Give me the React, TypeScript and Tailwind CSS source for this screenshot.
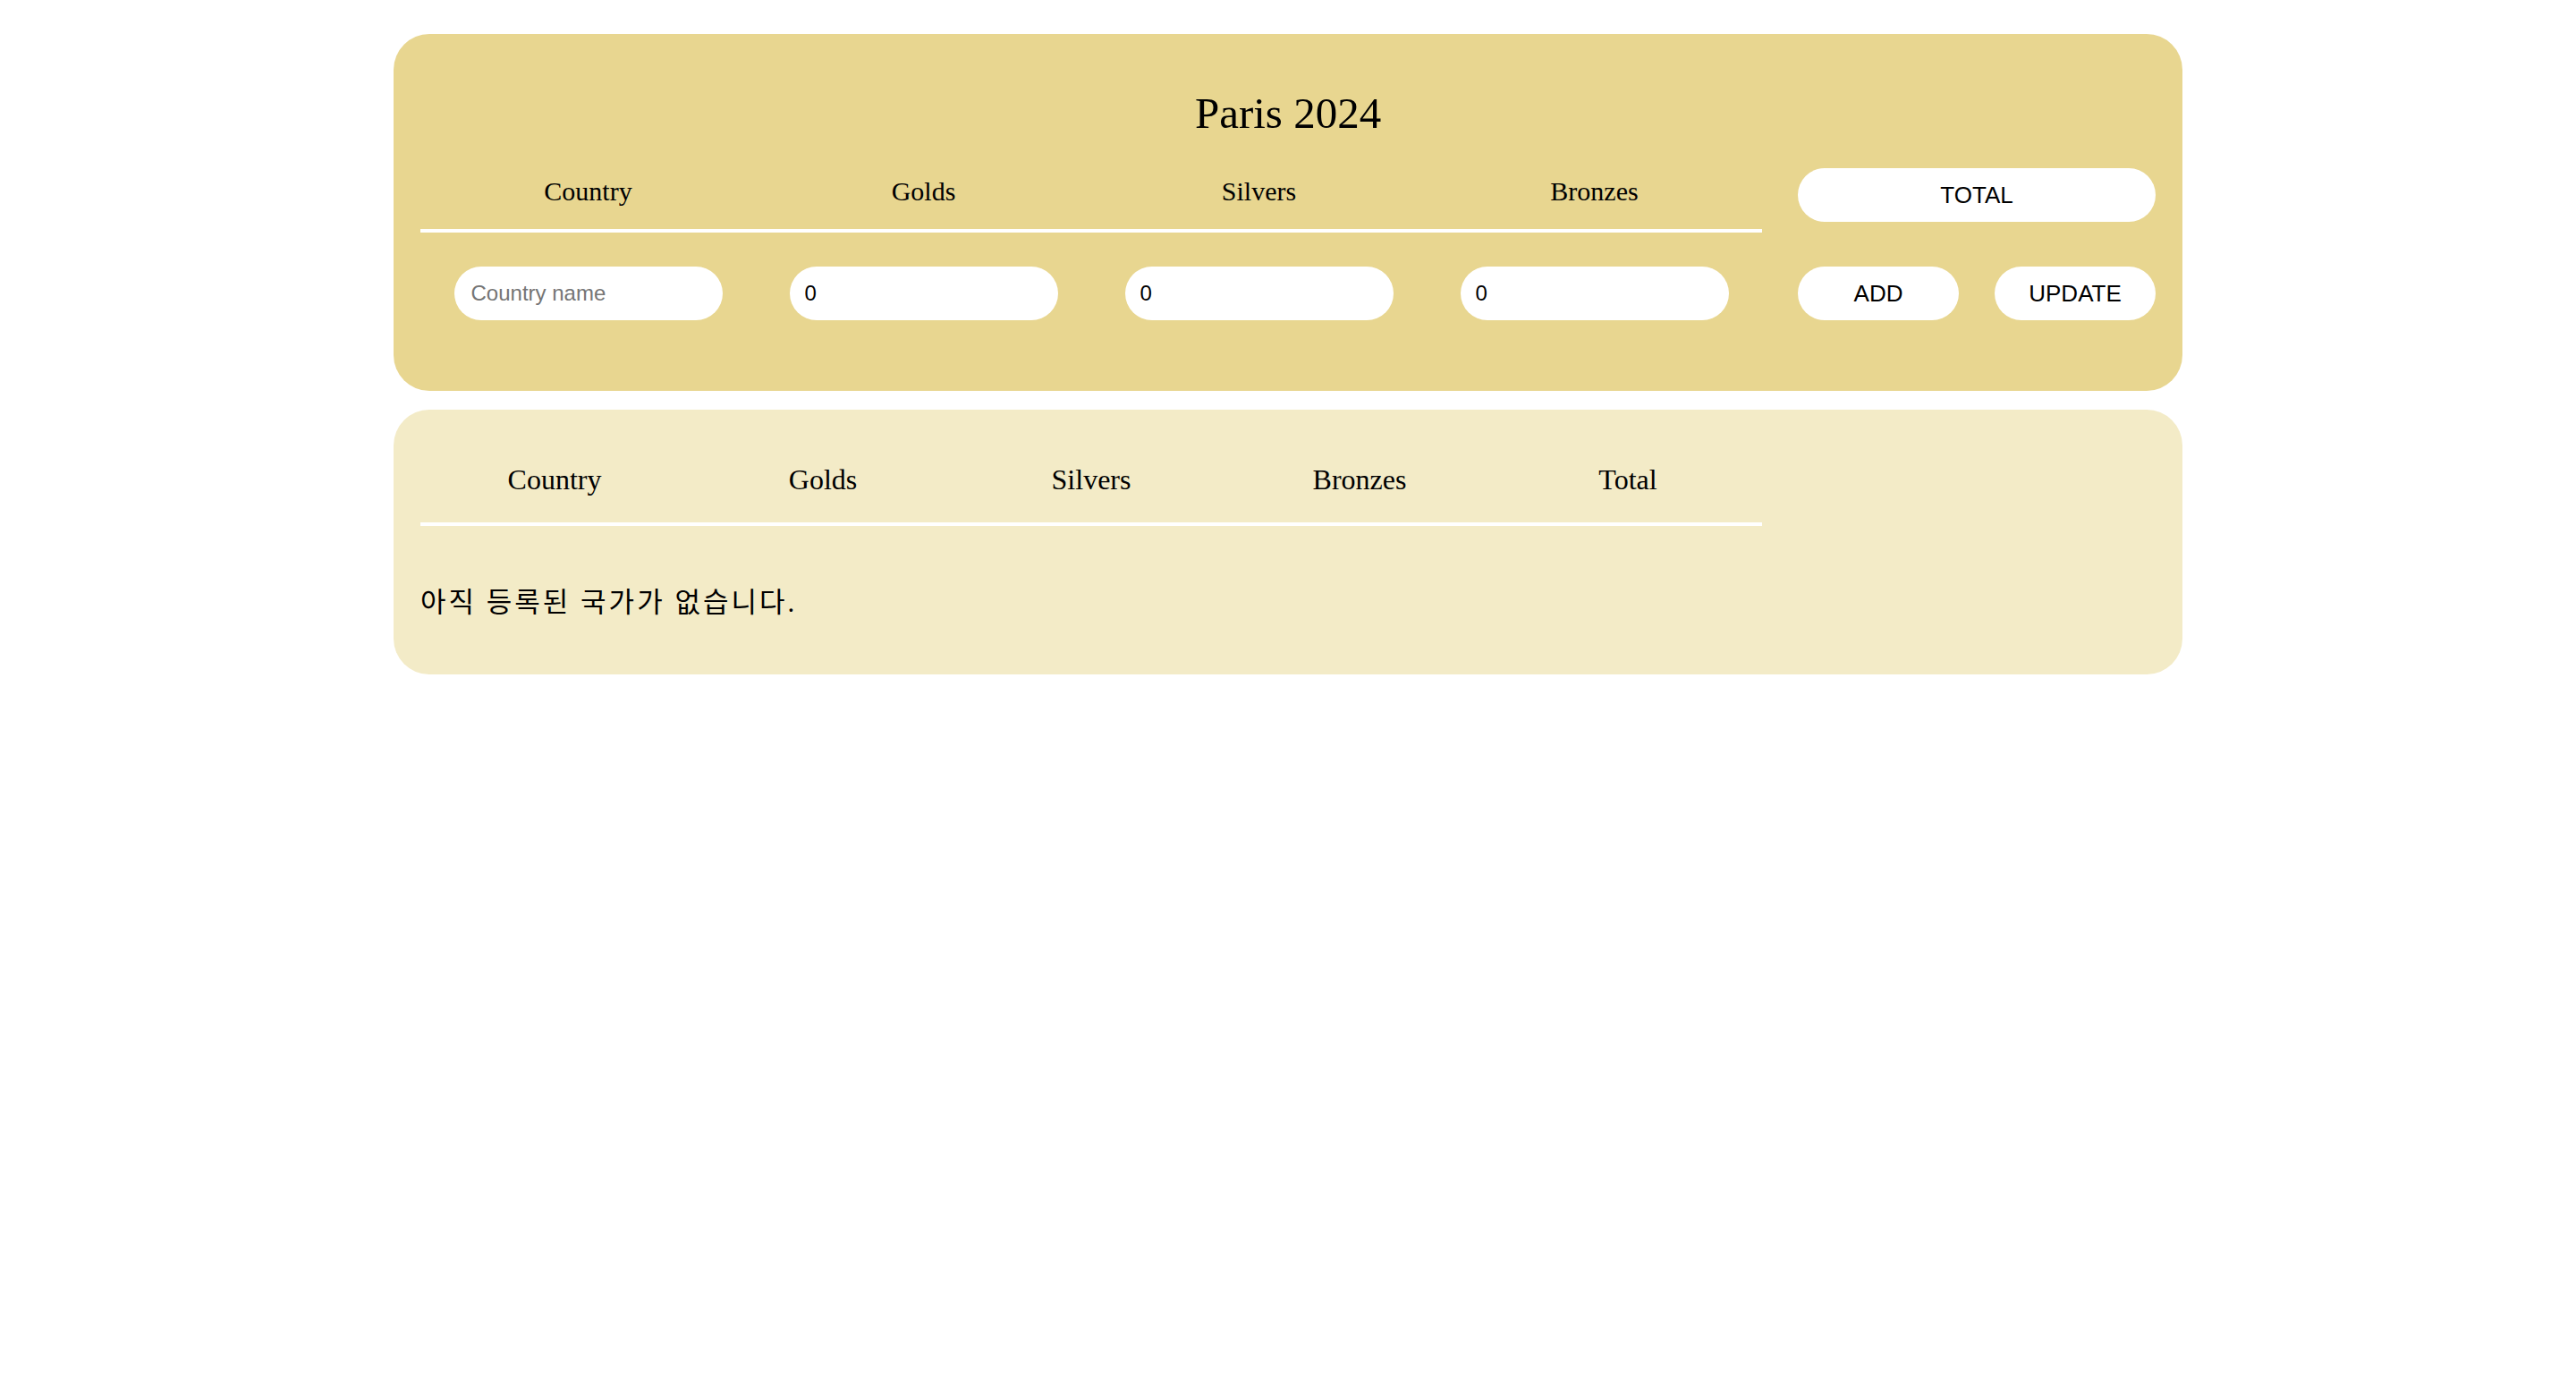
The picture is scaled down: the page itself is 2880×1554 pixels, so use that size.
import React from "react";

const serif = { fontFamily: '"Liberation Serif", "Noto Sans CJK KR", serif' };
const sans = { fontFamily: '"Liberation Sans", Arial, sans-serif' };

export default function App() {
  const topCols = ["Country", "Golds", "Silvers", "Bronzes"];
  const listCols = ["Country", "Golds", "Silvers", "Bronzes", "Total"];
  return (
    <div className="min-h-screen bg-white pt-[38px] text-black" style={serif}>
      <div className="mx-auto w-[2000px]">
        {/* Form panel */}
        <div className="rounded-[40px] bg-[#e8d690] px-[30px] pt-[61px] pb-[79px]">
          <h1 className="text-center text-[49px] leading-[56px] font-normal">Paris 2024</h1>
          <div className="mt-[33px] flex gap-[40px]">
            <div className="w-[1500px]">
              <div className="grid h-[72px] grid-cols-4 border-b-4 border-white pt-[9px] text-center text-[30px] leading-[34px]">
                {topCols.map((c) => (
                  <div key={c}>{c}</div>
                ))}
              </div>
              <div className="mt-[38px] grid grid-cols-4">
                <div className="flex justify-center">
                  <input
                    type="text"
                    placeholder="Country name"
                    className="h-[60px] w-[300px] rounded-full bg-white px-[19px] text-[24px] text-black outline-none placeholder:text-[#757575]"
                    style={sans}
                  />
                </div>
                {[0, 1, 2].map((i) => (
                  <div key={i} className="flex justify-center">
                    <input
                      type="number"
                      defaultValue={0}
                      className="h-[60px] w-[300px] rounded-full bg-white px-[17px] text-[24px] text-black outline-none [appearance:textfield] [&::-webkit-inner-spin-button]:appearance-none [&::-webkit-outer-spin-button]:appearance-none"
                      style={sans}
                    />
                  </div>
                ))}
              </div>
            </div>
            <div className="w-[400px]" style={sans}>
              <button className="h-[60px] w-full rounded-full bg-white text-[26px] text-black">TOTAL</button>
              <div className="mt-[50px] flex justify-between">
                <button className="h-[60px] w-[180px] rounded-full bg-white text-[26px] text-black">ADD</button>
                <button className="h-[60px] w-[180px] rounded-full bg-white text-[26px] text-black">UPDATE</button>
              </div>
            </div>
          </div>
        </div>

        {/* List panel */}
        <div className="mt-[21px] rounded-[40px] bg-[#f3ebc7] px-[30px] pt-[60px] pb-[58px]">
          <div className="w-[1500px]">
            <div className="grid grid-cols-5 border-b-4 border-white pb-[30px] text-center text-[32px] leading-[36px]">
              {listCols.map((c) => (
                <div key={c}>{c}</div>
              ))}
            </div>
          </div>
          <p className="mt-[64px] text-[31px] leading-[44px] tracking-[3px]">아직 등록된 국가가 없습니다.</p>
        </div>
      </div>
    </div>
  );
}
